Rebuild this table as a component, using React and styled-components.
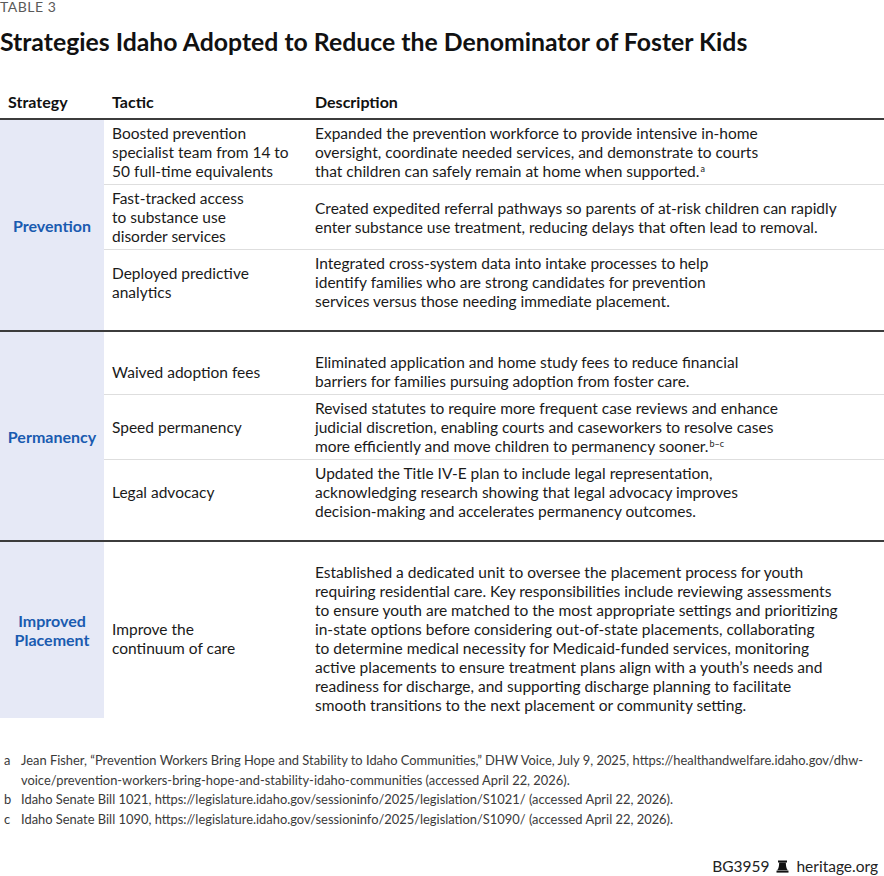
import React from "react";
import styled, { createGlobalStyle } from "styled-components";

const Global = createGlobalStyle`
  html, body { margin: 0; padding: 0; background: #fff; }
  body { font-family: Lato, "Open Sans", sans-serif; color: #1a1a1a; overflow: hidden; }
  #root { width: 884px; }
`;

const Page = styled.div`
  width: 884px;
  height: 876px;
  display: flex;
  flex-direction: column;
  overflow: hidden;
`;

const Eyebrow = styled.div`
  font-size: 14px;
  line-height: 14px;
  color: #5a5a5a;
  letter-spacing: 0.5px;
  margin-top: 0;
`;

const Title = styled.h1`
  margin: 13px 0 0;
  font-size: 24.8px;
  line-height: 30px;
  font-weight: 700;
  color: #111;
`;

const HeaderRow = styled.div`
  display: grid;
  grid-template-columns: 104px 203px 1fr;
  margin-top: 35px;
  border-bottom: 2px solid #3c3c3c;
  padding-bottom: 7px;
`;

const HeadCell = styled.div`
  font-size: 16px;
  line-height: 19px;
  font-weight: 700;
  color: #111;
  padding-left: 8px;
`;

const Group = styled.div`
  display: grid;
  grid-template-columns: 104px 1fr;
  border-bottom: ${(p) => (p.$last ? "none" : "2px solid #3c3c3c")};
`;

const StrategyCell = styled.div`
  background: #e6e9f6;
  display: flex;
  align-items: center;
  justify-content: center;
  text-align: center;
  color: #1a5bb0;
  font-weight: 700;
  font-size: 16px;
  line-height: 19px;
  padding: 0 6px;
`;

const Rows = styled.div`
  display: flex;
  flex-direction: column;
  padding-top: ${(p) => (p.$first ? "0" : "17px")};
  padding-bottom: ${(p) => (p.$last ? "0" : "16px")};
`;

const Row = styled.div`
  display: grid;
  grid-template-columns: 203px 1fr;
  align-items: center;
  padding: 4px 0 3px;
  border-top: ${(p) => (p.$first ? "none" : "1px solid #dedede")};
`;

const Cell = styled.div`
  font-size: 15.5px;
  line-height: 19px;
  color: #1a1a1a;
  padding-left: 8px;
  white-space: nowrap;
`;

const Sup = styled.sup`
  font-size: 9px;
  line-height: 0;
  vertical-align: 5px;
  margin-left: 1px;
`;

const Notes = styled.div`
  margin-top: 33px;
  display: flex;
  flex-direction: column;
`;

const Note = styled.div`
  display: grid;
  grid-template-columns: 17px 1fr;
  padding-left: 4px;
  font-size: 12.9px;
  line-height: 19.5px;
  color: #3a3a3a;
`;

const Credit = styled.div`
  margin-top: auto;
  margin-bottom: 0;
  align-self: flex-end;
  display: flex;
  align-items: center;
  gap: 7px;
  padding-right: 6px;
  font-size: 15.5px;
  line-height: 20px;
  color: #222;
`;

const lines = (arr) =>
  arr.map((l, i) => (
    <React.Fragment key={i}>
      {i > 0 && <br />}
      {l}
    </React.Fragment>
  ));

const groups = [
  {
    name: ["Prevention"],
    rows: [
      {
        tactic: ["Boosted prevention", "specialist team from 14 to", "50 full-time equivalents"],
        desc: [
          "Expanded the prevention workforce to provide intensive in-home",
          "oversight, coordinate needed services, and demonstrate to courts",
          "that children can safely remain at home when supported.",
        ],
        sup: "a",
      },
      {
        tactic: ["Fast-tracked access", "to substance use", "disorder services"],
        desc: [
          "Created expedited referral pathways so parents of at-risk children can rapidly",
          "enter substance use treatment, reducing delays that often lead to removal.",
        ],
      },
      {
        tactic: ["Deployed predictive", "analytics"],
        desc: [
          "Integrated cross-system data into intake processes to help",
          "identify families who are strong candidates for prevention",
          "services versus those needing immediate placement.",
        ],
      },
    ],
  },
  {
    name: ["Permanency"],
    rows: [
      {
        tactic: ["Waived adoption fees"],
        desc: [
          "Eliminated application and home study fees to reduce financial",
          "barriers for families pursuing adoption from foster care.",
        ],
      },
      {
        tactic: ["Speed permanency"],
        desc: [
          "Revised statutes to require more frequent case reviews and enhance",
          "judicial discretion, enabling courts and caseworkers to resolve cases",
          "more efficiently and move children to permanency sooner.",
        ],
        sup: "b–c",
      },
      {
        tactic: ["Legal advocacy"],
        desc: [
          "Updated the Title IV-E plan to include legal representation,",
          "acknowledging research showing that legal advocacy improves",
          "decision-making and accelerates permanency outcomes.",
        ],
      },
    ],
  },
  {
    name: ["Improved", "Placement"],
    rows: [
      {
        tactic: ["Improve the", "continuum of care"],
        desc: [
          "Established a dedicated unit to oversee the placement process for youth",
          "requiring residential care. Key responsibilities include reviewing assessments",
          "to ensure youth are matched to the most appropriate settings and prioritizing",
          "in-state options before considering out-of-state placements, collaborating",
          "to determine medical necessity for Medicaid-funded services, monitoring",
          "active placements to ensure treatment plans align with a youth’s needs and",
          "readiness for discharge, and supporting discharge planning to facilitate",
          "smooth transitions to the next placement or community setting.",
        ],
      },
    ],
  },
];

const notes = [
  {
    k: "a",
    t: [
      "Jean Fisher, “Prevention Workers Bring Hope and Stability to Idaho Communities,” DHW Voice, July 9, 2025, https://healthandwelfare.idaho.gov/dhw-",
      "voice/prevention-workers-bring-hope-and-stability-idaho-communities (accessed April 22, 2026).",
    ],
  },
  {
    k: "b",
    t: ["Idaho Senate Bill 1021, https://legislature.idaho.gov/sessioninfo/2025/legislation/S1021/ (accessed April 22, 2026)."],
  },
  {
    k: "c",
    t: ["Idaho Senate Bill 1090, https://legislature.idaho.gov/sessioninfo/2025/legislation/S1090/ (accessed April 22, 2026)."],
  },
];

const Bell = () => (
  <svg width="13" height="13" viewBox="0 0 13 13" aria-hidden="true">
    <rect x="2" y="0.5" width="9" height="2" fill="#111" />
    <path d="M3.2 2.5 H9.8 C10 6 10.2 8.5 11.8 10.2 H1.2 C2.8 8.5 3 6 3.2 2.5 Z" fill="#111" />
    <rect x="0.5" y="10.6" width="12" height="2" fill="#111" />
  </svg>
);

export default function App() {
  return (
    <Page>
      <Global />
      <Eyebrow>TABLE 3</Eyebrow>
      <Title>Strategies Idaho Adopted to Reduce the Denominator of Foster Kids</Title>
      <HeaderRow>
        <HeadCell>Strategy</HeadCell>
        <HeadCell>Tactic</HeadCell>
        <HeadCell>Description</HeadCell>
      </HeaderRow>
      {groups.map((g, gi) => (
        <Group key={gi} $last={gi === groups.length - 1}>
          <StrategyCell>{lines(g.name)}</StrategyCell>
          <Rows $first={gi === 0} $last={gi === groups.length - 1}>
            {g.rows.map((r, ri) => (
              <Row key={ri} $first={ri === 0}>
                <Cell>{lines(r.tactic)}</Cell>
                <Cell>
                  {lines(r.desc)}
                  {r.sup && <Sup>{r.sup}</Sup>}
                </Cell>
              </Row>
            ))}
          </Rows>
        </Group>
      ))}
      <Notes>
        {notes.map((n) => (
          <Note key={n.k}>
            <span>{n.k}</span>
            <span>{lines(n.t)}</span>
          </Note>
        ))}
      </Notes>
      <Credit>
        <span>BG3959</span>
        <Bell />
        <span>heritage.org</span>
      </Credit>
    </Page>
  );
}
